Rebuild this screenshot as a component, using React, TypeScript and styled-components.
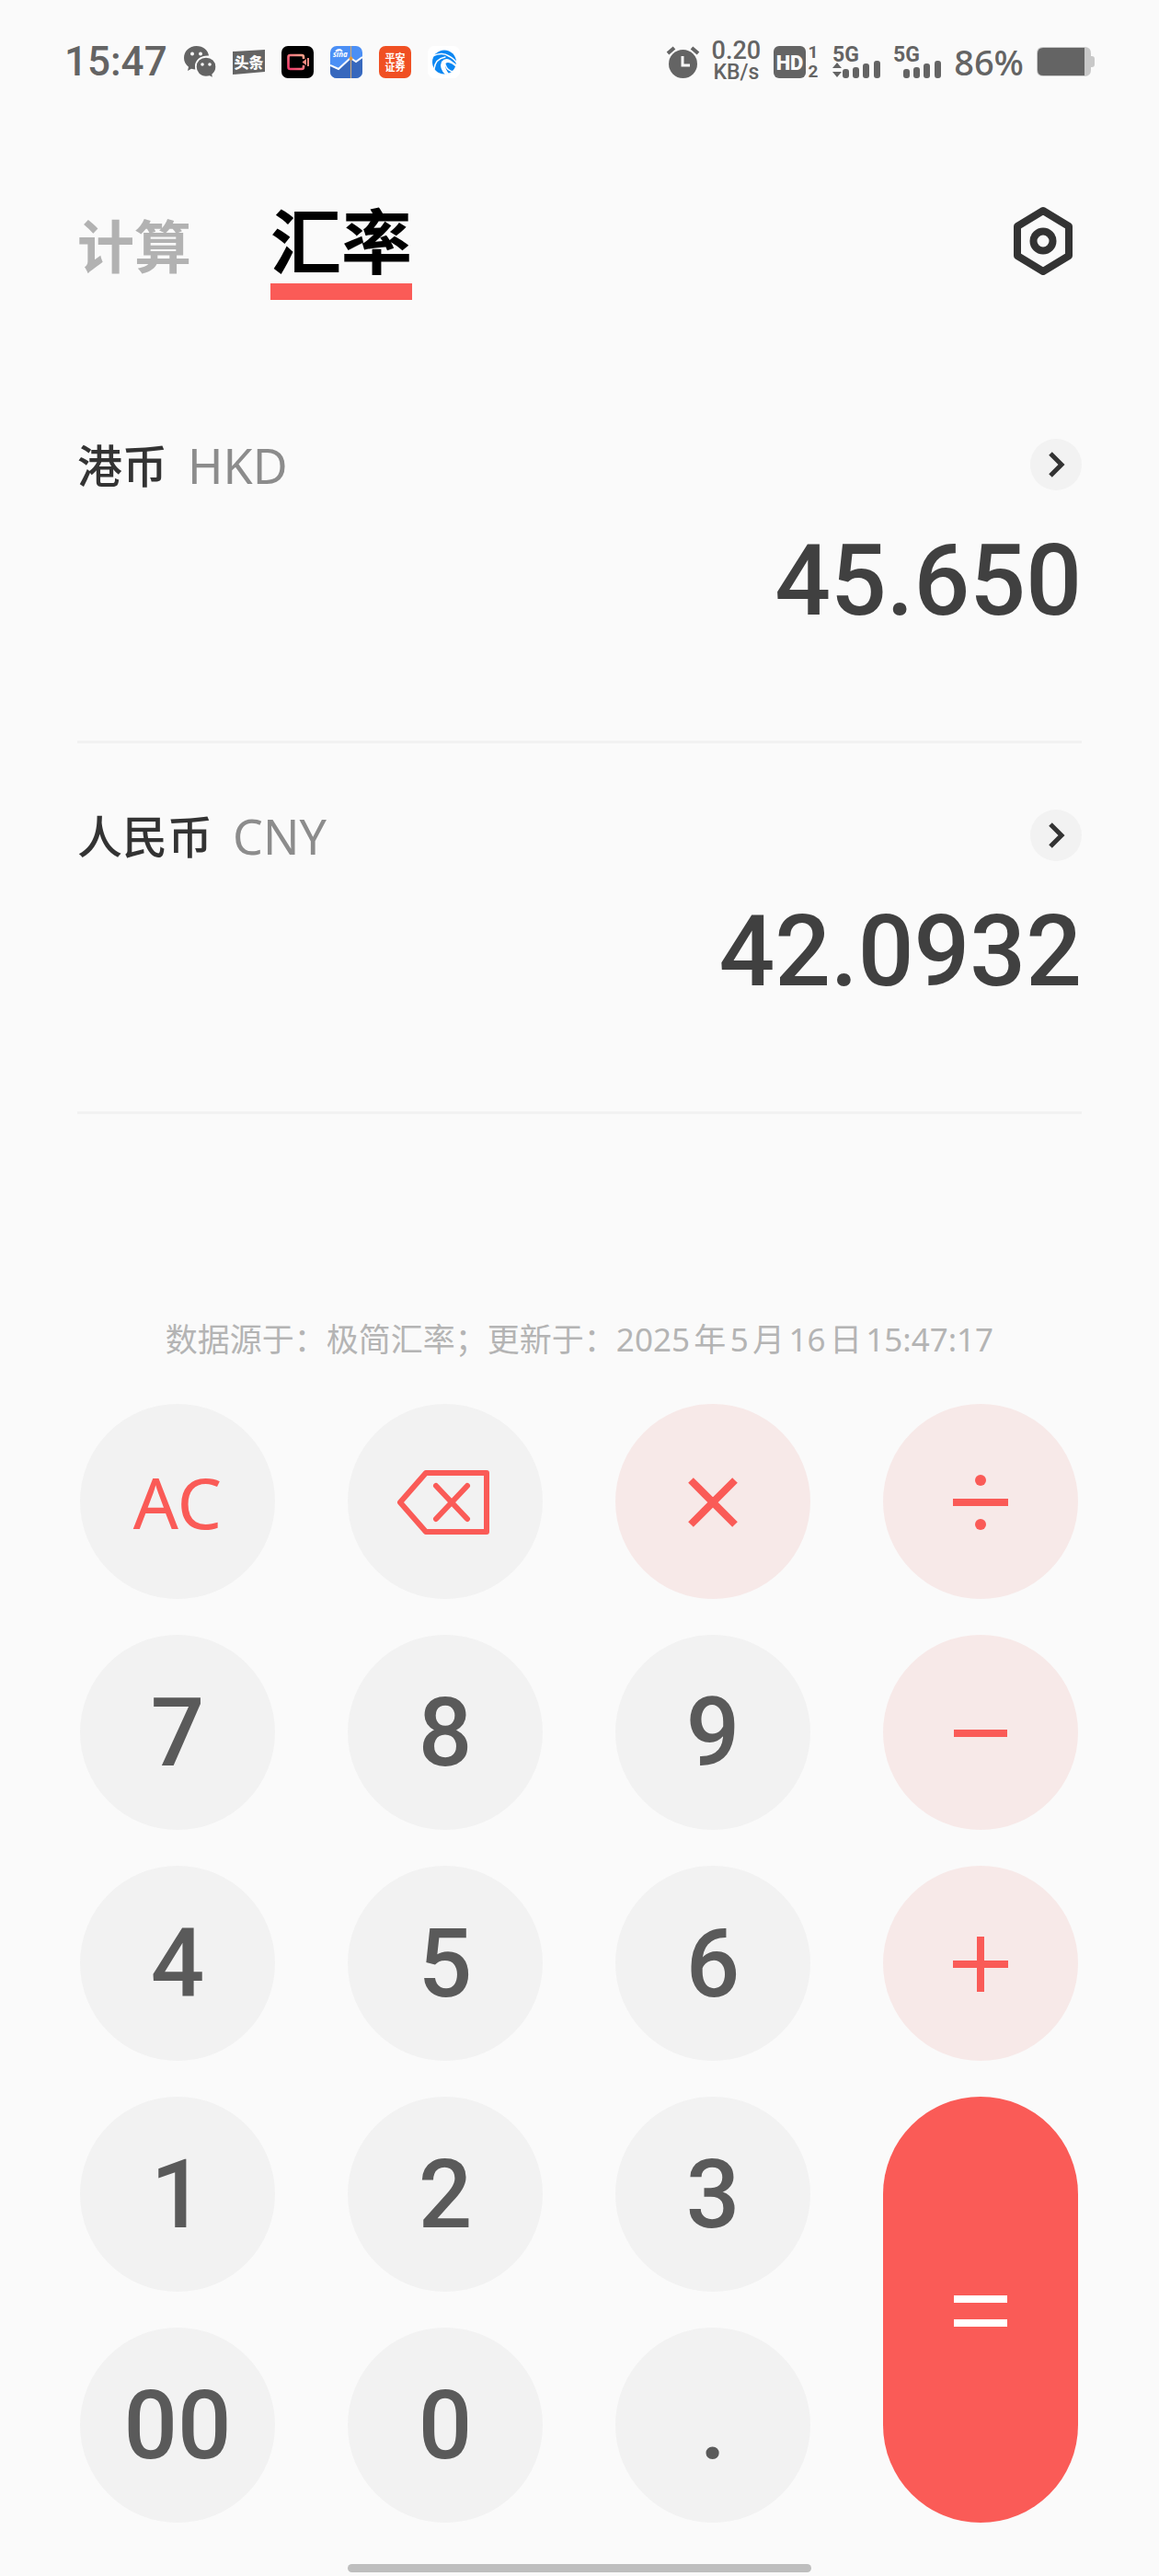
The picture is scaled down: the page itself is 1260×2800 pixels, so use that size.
import React, { useState } from "react";
import styled, { createGlobalStyle, css } from "styled-components";

const RATE = 0.922086;
const RED = "#fa5b57";
const STATUS = "#646464";
const FONT = '"Noto Sans", "Noto Sans CJK SC", sans-serif';
const DIGITS = 'Roboto, "Noto Sans", sans-serif';

const GlobalStyle = createGlobalStyle`
  *, *::before, *::after { box-sizing: border-box; }
  body { margin: 0; background: #fafafa; font-family: ${FONT}; }
  button { border: 0; padding: 0; background: none; font-family: inherit; cursor: pointer; }
  svg { display: block; flex: none; overflow: visible; }
`;

const Page = styled.div`
  display: flex;
  flex-direction: column;
  background: #fafafa;
`;

/* Status bar */

const StatusBar = styled.div`
  display: flex;
  align-items: center;
  justify-content: space-between;
  height: 134px;
  padding: 0 70px;
  color: ${STATUS};
`;

const StatusGroup = styled.div<{ $gap: number }>`
  display: flex;
  align-items: center;
  gap: ${(p) => p.$gap}px;
`;

const Clock = styled.time`
  font-family: ${DIGITS};
  font-size: 44px;
  line-height: 50px;
  font-weight: 500;
`;

const NetSpeed = styled.div`
  display: flex;
  flex-direction: column;
  align-items: center;
  font-family: ${DIGITS};
  font-size: 27px;
  line-height: 24px;
  font-weight: 500;
`;

const SpeedUnit = styled.span`
  font-size: 23px;
`;

const Battery = styled.span`
  font-size: 38px;
  line-height: 50px;
  font-weight: 500;
`;

/* Header */

const Header = styled.header`
  display: flex;
  align-items: center;
  justify-content: space-between;
  margin-top: 84px;
  padding: 0 89px 0 84px;
`;

const Tabs = styled.nav`
  display: flex;
  align-items: baseline;
  gap: 86px;
`;

const Tab = styled.button<{ $active?: boolean }>`
  font-weight: 700;
  font-size: 62px;
  line-height: 90px;
  color: #b2b2b2;
  ${(p) =>
    p.$active &&
    css`
      font-size: 77px;
      color: #000;
      &::after {
        content: "";
        display: block;
        height: 18px;
        background: ${RED};
      }
    `}
`;

const SettingsButton = styled.button`
  padding-bottom: 20px;
  color: #333;
`;

/* Currency rows */

const Currencies = styled.main`
  margin: 79px 84px 0;
`;

const CurrencyRow = styled.section`
  padding: 72px 0 113px;
  border-bottom: 3px solid #f2f2f2;
`;

const CurrencyHead = styled.div`
  display: flex;
  align-items: center;
  justify-content: space-between;
  height: 56px;
`;

const CurrencyName = styled.h2`
  display: flex;
  align-items: center;
  gap: 22px;
  margin: 0;
  padding-top: 2px;
  font-size: 49px;
  line-height: 56px;
  font-weight: 500;
  color: #333;
`;

const CurrencyCode = styled.span`
  font-size: 52px;
  font-weight: 400;
  color: #8c8c8c;
`;

const PickButton = styled.button`
  display: grid;
  place-items: center;
  width: 56px;
  height: 56px;
  border-radius: 50%;
  background: #f2f2f2;
  color: #333;
`;

const Amount = styled.output`
  display: block;
  margin-top: 39px;
  font-family: ${DIGITS};
  font-size: 107px;
  line-height: 120px;
  font-weight: 500;
  text-align: right;
  color: #404040;
`;

const Source = styled.p`
  margin: 220px 0 45px;
  font-size: 35px;
  line-height: 50px;
  text-align: center;
  text-autospace: normal;
  color: #b4b4b4;
`;

/* Keypad */

const Keypad = styled.div`
  display: grid;
  grid-template-columns: repeat(4, 212px);
  grid-auto-rows: 212px;
  justify-content: space-between;
  row-gap: 39px;
  padding: 0 88px 0 87px;
`;

type Tone = "digit" | "edit" | "operator" | "equals";

const tones = {
  digit: css`
    background: #f2f2f2;
    color: #5a5a5a;
    font-family: ${DIGITS};
    font-size: 103px;
    font-weight: 500;
  `,
  edit: css`
    background: #f2f2f2;
    color: ${RED};
    font-size: 77px;
  `,
  operator: css`
    background: #f7e9e8;
    color: ${RED};
  `,
  equals: css`
    grid-row: span 2;
    background: ${RED};
    color: #fff;
  `,
};

const Key = styled.button<{ $tone: Tone }>`
  display: flex;
  align-items: center;
  justify-content: center;
  padding-top: 2px;
  border-radius: 106px;
  line-height: 120px;
  ${(p) => tones[p.$tone]}
`;

const HomeBar = styled.div`
  width: 40%;
  height: 9px;
  margin: 45px auto 4px;
  border-radius: 5px;
  background: #bebebe;
`;

/* Drawings */

const WechatIcon = () => (
  <svg width="35" height="35" viewBox="0 0 35 35">
    <path
      d="M13.500 0C21 0 26 4.500 27 10.500 18 10 11.500 15.500 12 23l.5 2.500c-1.500 0-3-.2-4.500-.7L4 27l1-4.200C2 20.500 0 17 0 13 0 5.500 6 0 13.500 0Z"
      fill={STATUS}
    />
    <path
      d="M24 12c6.500 0 11 4.700 11 10.500 0 3.500-1.500 6.500-4 8.500l.8 4-3.800-2c-1.300.4-2.600.5-4 .5-6.500 0-11-5-11-11S17.500 12 24 12Z"
      fill={STATUS}
      stroke="#fafafa"
      strokeWidth="1.400"
    />
    <g fill="#fafafa">
      <circle cx="9" cy="8.500" r="2" />
      <circle cx="18" cy="8.500" r="2" />
      <circle cx="20" cy="20" r="1.800" />
      <circle cx="28" cy="20" r="1.800" />
    </g>
  </svg>
);

const ToutiaoIcon = () => (
  <svg width="35" height="35" viewBox="0 0 35 35">
    <path d="M0 6 35 4v24L0 31Z" fill={STATUS} />
    <text x="17.5" y="24" fontSize="16" fontWeight="900" textAnchor="middle" fill="#fafafa" fontFamily={FONT}>
      头条
    </text>
  </svg>
);

const RecorderIcon = () => (
  <svg width="35" height="35" viewBox="0 0 35 35">
    <defs>
      <linearGradient id="rec" x1="0" y1="1" x2="1" y2="0">
        <stop offset="0" stopColor="#f0386b" />
        <stop offset="1" stopColor="#fba58c" />
      </linearGradient>
    </defs>
    <rect width="35" height="35" rx="7" fill="#000" />
    <path
      d="M24 14v-2q0-2-2-2H9.500q-2 0-2 2v11q0 2 2 2H22q2 0 2-2v-2"
      fill="none"
      stroke="url(#rec)"
      strokeWidth="2.600"
    />
    <path d="M22.500 17.500 27 14v7Z" fill="#f58a80" />
    <path d="M29 13v9" stroke="#f58a80" strokeWidth="2" />
  </svg>
);

const SinaIcon = () => (
  <svg width="35" height="35" viewBox="0 0 35 35">
    <clipPath id="sina">
      <rect width="35" height="35" rx="7" />
    </clipPath>
    <g clipPath="url(#sina)">
      <rect width="35" height="35" fill="#4b8ff5" />
      <path d="M0 21 9 25 22 13l6 4 7-5v23H0Z" fill="#3768bd" />
      <path d="M22.500 0v35" stroke="#c9a77a" strokeWidth="1.200" />
      <path d="M0 21 9 25 22 13l6 4 7-5" fill="none" stroke="#fff" strokeWidth="2" />
      <circle cx="22.500" cy="13.500" r="2" fill="#e79a3c" />
      <path d="M6 6q4-4 7 0" fill="none" stroke="#fff" strokeWidth="2" />
      <text x="3" y="12" fontSize="8" fontWeight="700" fontStyle="italic" fill="#fff" fontFamily={FONT}>
        sina
      </text>
    </g>
  </svg>
);

const PinganIcon = () => (
  <svg width="35" height="35" viewBox="0 0 35 35">
    <rect width="35" height="35" rx="7" fill="#f05023" />
    <g fill="#fff" fontSize="11" fontWeight="700" textAnchor="middle" fontFamily={FONT}>
      <text x="17.500" y="16.500">平安</text>
      <text x="17.500" y="27">证券</text>
    </g>
  </svg>
);

const SwirlIcon = () => (
  <svg width="35" height="35" viewBox="0 0 35 35">
    <rect width="35" height="35" rx="7" fill="#fff" />
    <circle cx="18" cy="17.500" r="13" fill="#0c87f2" />
    <g fill="none" stroke="#fff" strokeLinecap="round">
      <path d="M5 11q11-5 18 0 6 3 9 8" strokeWidth="1.600" />
      <path d="M7 25q1-11 12-13" strokeWidth="1.400" />
      <path d="M28 28q-7-1-9-8" strokeWidth="1.400" />
    </g>
    <path d="M15 17q4-5 9-2l7 5 1 4q-6-6-10-6-3 0-3 3 0 4 4 9l-4 1q-7-7-4-14Z" fill="#fff" />
  </svg>
);

const AlarmIcon = () => (
  <svg width="35" height="35" viewBox="0 0 35 35">
    <circle cx="17.500" cy="19.500" r="15.500" fill={STATUS} />
    <path d="m1 8 7-6M34 8l-7-6" stroke={STATUS} strokeWidth="4" />
    <path d="M17 11v10h8" fill="none" stroke="#fafafa" strokeWidth="3" />
  </svg>
);

const HdIcon = () => (
  <svg width="50" height="35" viewBox="0 0 50 35">
    <rect width="35" height="35" rx="6" fill={STATUS} />
    <g fontFamily={DIGITS} textAnchor="middle">
      <text x="17.500" y="25.500" fontSize="22" fontWeight="900" fill="#fafafa">HD</text>
      <g fill={STATUS} fontSize="19" fontWeight="700">
        <text x="43" y="13">1</text>
        <text x="43" y="34">2</text>
      </g>
    </g>
  </svg>
);

const SignalIcon = ({ traffic }: { traffic?: boolean }) => (
  <svg width="52" height="35" viewBox="0 0 52 35" fill={STATUS}>
    <text x="0" y="17" fontSize="23" fontWeight="700" fontFamily={DIGITS}>5G</text>
    {traffic && <path d="m5 18 5 6H0ZM0 28h10l-5 6Z" />}
    <rect x="11" y="25" width="7" height="10" rx="3" />
    <rect x="22" y="23" width="7" height="12" rx="3" />
    <rect x="33" y="19" width="7" height="16" rx="3" />
    <rect x="45" y="16" width="7" height="19" rx="3" />
  </svg>
);

const BatteryIcon = () => (
  <svg width="63" height="32" viewBox="0 0 63 32">
    <path d="M7 0h45q7 0 7 7v3h1q3 0 3 3v6q0 3-3 3h-1v3q0 7-7 7H7q-7 0-7-7V7q0-7 7-7Z" fill="#c8c8c8" />
    <path d="M7 1h45v30H7q-6 0-6-6V7q0-6 6-6Z" fill={STATUS} />
  </svg>
);

const SettingsIcon = () => (
  <svg
    width="74"
    height="74"
    viewBox="0 0 74 74"
    fill="none"
    stroke="currentColor"
    strokeWidth="8"
    strokeLinejoin="round"
  >
    <path d="M37 4 65 21v32L37 70 9 53V21Z" />
    <circle cx="37" cy="37" r="10.500" />
  </svg>
);

const ChevronIcon = () => (
  <svg width="28" height="28" viewBox="0 0 28 28" fill="none" stroke="currentColor" strokeWidth="5">
    <path d="m8 2 12 12L8 26" />
  </svg>
);

const BackspaceIcon = () => (
  <svg
    width="104"
    height="70"
    viewBox="0 0 104 70"
    fill="none"
    stroke="currentColor"
    strokeWidth="6"
    strokeLinejoin="round"
  >
    <path d="M31 3h66v64H31L3 35Z" />
    <path d="m42 17 34 36M76 17 42 53" strokeLinecap="round" />
  </svg>
);

const shapes = {
  times: <path d="m6 6 48 48M54 6 6 54" />,
  divide: (
    <>
      <path d="M0 30h60" />
      <circle cx="30" cy="6" r="6" fill="currentColor" stroke="none" />
      <circle cx="30" cy="54" r="6" fill="currentColor" stroke="none" />
    </>
  ),
  minus: <path d="M1 30h58" />,
  plus: <path d="M0 30h60M30 0v60" />,
  equals: <path d="M1 17h58M1 43h58" />,
};

const OperatorIcon = ({ name }: { name: keyof typeof shapes }) => (
  <svg width="60" height="60" viewBox="0 0 60 60" fill="none" stroke="currentColor" strokeWidth="8">
    {shapes[name]}
  </svg>
);

type KeySpec = { id: string; tone: Tone; label?: string; icon?: React.ReactNode };

const digit = (id: string): KeySpec => ({ id, tone: "digit" });

const KEYS: KeySpec[] = [
  { id: "AC", tone: "edit" },
  { id: "back", tone: "edit", label: "删除", icon: <BackspaceIcon /> },
  { id: "*", tone: "operator", label: "乘", icon: <OperatorIcon name="times" /> },
  { id: "/", tone: "operator", label: "除", icon: <OperatorIcon name="divide" /> },
  digit("7"),
  digit("8"),
  digit("9"),
  { id: "-", tone: "operator", label: "减", icon: <OperatorIcon name="minus" /> },
  digit("4"),
  digit("5"),
  digit("6"),
  { id: "+", tone: "operator", label: "加", icon: <OperatorIcon name="plus" /> },
  digit("1"),
  digit("2"),
  digit("3"),
  { id: "=", tone: "equals", label: "等于", icon: <OperatorIcon name="equals" /> },
  digit("00"),
  digit("0"),
  digit("."),
];

const compute = (a: number, op: string, b: number) =>
  op === "+" ? a + b : op === "-" ? a - b : op === "*" ? a * b : a / b;

export default function App() {
  const [amount, setAmount] = useState("45.650");
  const [pending, setPending] = useState<{ value: number; op: string } | null>(null);
  const [fresh, setFresh] = useState(true);

  const press = ({ id, tone }: KeySpec) => {
    if (id === "AC") {
      setAmount("0");
      setPending(null);
    } else if (id === "back") {
      setAmount(amount.slice(0, -1) || "0");
    } else if (tone === "digit") {
      const base = fresh || amount === "0" ? "" : amount;
      if (id === "." && base.includes(".")) return;
      setAmount(id === "." ? (base || "0") + "." : base + id);
      setFresh(false);
    } else {
      const value = pending ? compute(pending.value, pending.op, Number(amount)) : Number(amount);
      if (pending) setAmount(String(value));
      setPending(id === "=" ? null : { value, op: id });
      setFresh(true);
    }
  };

  const rows = [
    { name: "港币", code: "HKD", value: amount },
    { name: "人民币", code: "CNY", value: (Number(amount) * RATE).toFixed(4) },
  ];

  return (
    <Page lang="zh-CN">
      <GlobalStyle />
      <StatusBar>
        <StatusGroup $gap={18}>
          <Clock>15:47</Clock>
          <WechatIcon />
          <ToutiaoIcon />
          <RecorderIcon />
          <SinaIcon />
          <PinganIcon />
          <SwirlIcon />
        </StatusGroup>
        <StatusGroup $gap={14}>
          <AlarmIcon />
          <NetSpeed>
            <span>0.20</span>
            <SpeedUnit>KB/s</SpeedUnit>
          </NetSpeed>
          <HdIcon />
          <SignalIcon traffic />
          <SignalIcon />
          <Battery>86%</Battery>
          <BatteryIcon />
        </StatusGroup>
      </StatusBar>

      <Header>
        <Tabs>
          <Tab type="button">计算</Tab>
          <Tab type="button" $active aria-current="page">汇率</Tab>
        </Tabs>
        <SettingsButton type="button" aria-label="设置">
          <SettingsIcon />
        </SettingsButton>
      </Header>

      <Currencies>
        {rows.map((row) => (
          <CurrencyRow key={row.code}>
            <CurrencyHead>
              <CurrencyName>
                {row.name}
                <CurrencyCode>{row.code}</CurrencyCode>
              </CurrencyName>
              <PickButton type="button" aria-label={`选择${row.name}`}>
                <ChevronIcon />
              </PickButton>
            </CurrencyHead>
            <Amount>{row.value}</Amount>
          </CurrencyRow>
        ))}
      </Currencies>

      <Source>数据源于：极简汇率；更新于：2025年5月16日15:47:17</Source>

      <Keypad>
        {KEYS.map((key) => (
          <Key key={key.id} type="button" $tone={key.tone} aria-label={key.label} onClick={() => press(key)}>
            {key.icon ?? key.id}
          </Key>
        ))}
      </Keypad>
      <HomeBar />
    </Page>
  );
}
